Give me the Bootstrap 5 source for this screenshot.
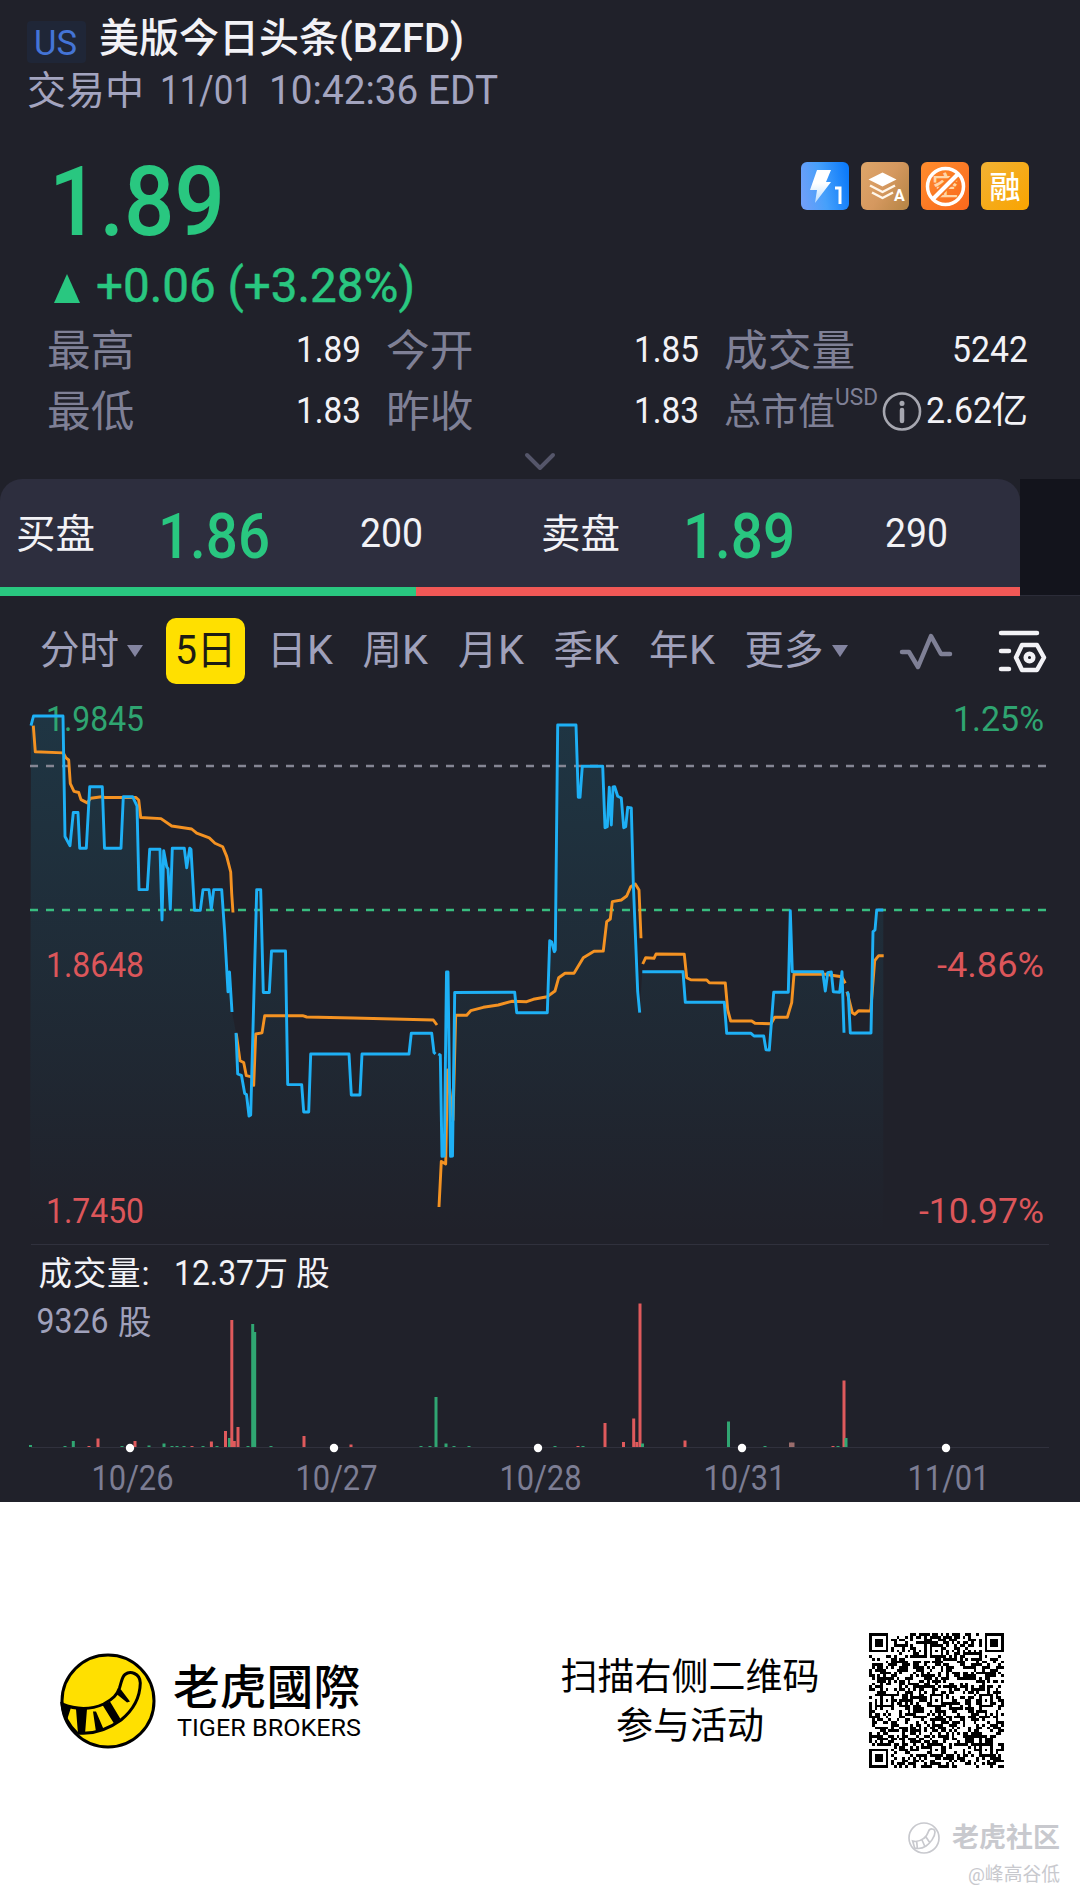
<!DOCTYPE html>
<html lang="zh-CN">

<head>
    <meta charset="UTF-8">
    <meta name="viewport" content="width=device-width, initial-scale=1.0">
    <title>美版今日头条(BZFD)</title>
    <link href="https://cdn.jsdelivr.net/npm/bootstrap@5.3.0/dist/css/bootstrap.min.css" rel="stylesheet">
    <style>
        body {
            width: 1080px;
            height: 1899px;
            overflow: hidden;
            background: #fff;
            font-family: Roboto, "Noto Sans CJK SC", sans-serif;
            line-height: 1;
        }

        .quote { height: 1502px; background: #20212a; color: #f2f2f6; }
        .fit { display: inline-block; white-space: nowrap; transform-origin: left center; font-weight: 400; }
        .fit-m { font-weight: 500; }
        .up { color: #29c780; }

        /* 標題 */
        .title-row { height: 62px; padding: 16px 0 0 27px; }
        .us-tag { width: 59px; height: 42px; margin-top: 5px; border-radius: 4px; background: #1f2637; color: #4474d6; font-size: 35px; padding: 3px 2px 0 0; }
        .stock-name { margin-left: 13px; height: 46px; font-size: 40px; font-weight: 500; }
        .status-row { height: 58px; padding-left: 27px; font-size: 39px; color: #a3a4bf; }
        .status-row .fit { font-size: 40px; }

        /* 價格 */
        .price-row { height: 135px; padding: 42px 51px 0 49px; }
        .price { height: 80px; font-size: 97px; }
        .tags { gap: 12px; }
        .change-row { height: 61px; padding-left: 54px; font-size: 48px; -webkit-text-stroke: .5px #29c780; }
        .change-row svg { margin: 6px 16px 0 0; }
        .stats { display: grid; grid-template-columns: 314px 313px 304px; grid-auto-rows: 61px; column-gap: 25px; padding: 4px 0 0 47px; height: 129px; }
        .stat-label { font-size: 43.7px; color: #7f8096; padding-top: 2px; }
        .stat-label-s { font-size: 37px; }
        .stat-val { font-size: 36.5px; }
        .usd { font-size: 23px; margin-bottom: 28px; color: #7f8096; }
        .chevron-row { height: 34px; padding-top: 7px; }

        /* 買賣盤 */
        .book { height: 117px; background: linear-gradient(to right, #20212a 1020px, #13141c 1020px); box-shadow: inset 0 -1px #2b2c38; }
        .book-inner { width: 1020px; background: #2d2e3e; border-radius: 22px 22px 0 0; }
        .book-side { width: 525px; height: 108px; padding-left: 16px; }
        .book-label { width: 142px; padding-top: 3px; font-size: 39.5px; }
        .book-price { width: 202px; padding-top: 6px; font-size: 63px; }
        .book-qty { font-size: 41px; }
        .book-bar { height: 9px; background: #f15856; }
        .book-bar div { width: 416px; background: #29c780; }

        /* 週期 */
        .tabs { height: 94px; padding: 15px 33px 0 40px; font-size: 39.5px; color: #a0a1bb; }
        .tab-on { width: 79px; height: 66px; margin: 0 22px 0 23px; border-radius: 10px; background: #ffe000; color: #1d1c14; }
        .tab-k { width: 95.5px; }
        .tab-k .fit, .tab-on .fit { font-size: 41px; }
        .tool-icons { gap: 45px; }
        .caret { width: 0; border: 8px solid transparent; border-top: 12px solid #8384a0; border-bottom: 0; }
        .chart text { font-weight: 400; font-size: 35px; }
        .chart .cjk { font-size: 33.5px; }

        /* 頁尾 */
        .foot { height: 397px; padding: 0 76px 0 60px; color: #000; }
        .brand { width: 191px; margin-left: 17px; }
        .brand-cn { font-family: "Noto Sans CJK TC", sans-serif; font-size: 46.8px; font-weight: 500; line-height: 50px; }
        .brand-en { padding: 4px 0 0 4px; font-size: 24px; line-height: 30px; }
        .scan { width: 270px; margin: 2px 0 0 191px; font-size: 37px; line-height: 49px; white-space: nowrap; }
        .wm { color: #c8c9ce; right: 20px; bottom: 14px; }
        .wm-name { font-size: 27px; font-weight: 700; }
        .wm-user { margin-top: 12px; font-size: 18.8px; }
    </style>
</head>

<body>
    <main class="quote">
        <div class="title-row d-flex">
            <div class="us-tag d-flex align-items-center justify-content-center"><span class="fit" data-w="43">US</span></div>
            <div class="stock-name d-flex align-items-center">美版今日头条<span class="fit fit-m" data-w="125">(BZFD)</span></div>
        </div>
        <div class="status-row d-flex align-items-center">交易中<span class="fit ms-3" data-w="93">11/01</span><span class="fit ms-3" data-w="229">10:42:36 EDT</span></div>

        <div class="price-row d-flex justify-content-between">
            <div class="price up d-flex align-items-center"><span class="fit fit-m" data-w="176">1.89</span></div>
            <div class="tags d-flex">
                <svg width="48" height="48" viewBox="0 0 48 48">
                    <defs>
                        <linearGradient id="g1" x1="0" y1="0.6" x2="1" y2="0.4"><stop offset="0" stop-color="#6f9ff8"/><stop offset=".45" stop-color="#46a0fb"/><stop offset="1" stop-color="#0d7bfa"/></linearGradient>
                        <linearGradient id="g2" x1="0" y1="0.2" x2="1" y2="0.8"><stop offset="0" stop-color="#dda468"/><stop offset=".5" stop-color="#d5985f"/><stop offset="1" stop-color="#b98748"/></linearGradient>
                        <linearGradient id="g3" x1="0" y1="0" x2="1" y2="1"><stop offset="0" stop-color="#ff8d2e"/><stop offset="1" stop-color="#f9681c"/></linearGradient>
                        <linearGradient id="g4" x1="0" y1="0" x2="1" y2="1"><stop offset="0" stop-color="#f2b234"/><stop offset="1" stop-color="#f9a400"/></linearGradient>
                        <linearGradient id="g5" x1="0" y1="0" x2="0" y2="1"><stop offset=".4" stop-color="#fff"/><stop offset="1" stop-color="#b9dcfd"/></linearGradient>
                    </defs>
                    <rect width="48" height="48" rx="6" fill="url(#g1)"/>
                    <path d="M16 8h14l-5 12h5L14 41l2-13H9z" fill="url(#g5)"/>
                    <path d="M34 26h5v16" fill="none" stroke="#fff" stroke-width="3"/>
                </svg>
                <svg width="48" height="48" viewBox="0 0 48 48">
                    <rect width="48" height="48" rx="6" fill="url(#g2)"/>
                    <path d="M21.500 10.500L35.500 17.500 21.500 24.500 7.500 17.500z" fill="#fff"/>
                    <path d="M9 23.500l12.500 6.500L34 23.500M11 30.500l10.500 5.500L32 30.500" fill="none" stroke="#fff6ea" stroke-width="2.500" stroke-linejoin="round"/>
                    <text x="33" y="39" font-size="16" font-weight="700" fill="#fff">A</text>
                </svg>
                <svg width="48" height="48" viewBox="0 0 48 48">
                    <rect width="48" height="48" rx="6" fill="url(#g3)"/>
                    <text x="11" y="34" font-size="27" font-weight="500" fill="#ffd6a8">空</text>
                    <path d="M12 37L37 12" stroke="#f97a24" stroke-width="8"/>
                    <path d="M12 37L37 12" stroke="#fff" stroke-width="4"/>
                    <circle cx="24.500" cy="24.500" r="18" fill="none" stroke="#fff" stroke-width="3.500"/>
                </svg>
                <svg width="48" height="48" viewBox="0 0 48 48">
                    <rect width="48" height="48" rx="6" fill="url(#g4)"/>
                    <text x="8.500" y="36" font-size="31" font-weight="500" fill="#fff">融</text>
                </svg>
            </div>
        </div>
        <div class="change-row up d-flex align-items-center">
            <svg width="26" height="29"><path d="M13 0L26 29H0z" fill="#29c780"/></svg>
            <span class="fit" data-w="319">+0.06 (+3.28%)</span>
        </div>

        <div class="stats">
            <div class="d-flex align-items-center justify-content-between"><span class="stat-label">最高</span><span class="stat-val"><span class="fit" data-w="65">1.89</span></span></div>
            <div class="d-flex align-items-center justify-content-between"><span class="stat-label">今开</span><span class="stat-val"><span class="fit" data-w="65">1.85</span></span></div>
            <div class="d-flex align-items-center justify-content-between"><span class="stat-label">成交量</span><span class="stat-val"><span class="fit" data-w="76">5242</span></span></div>
            <div class="d-flex align-items-center justify-content-between"><span class="stat-label">最低</span><span class="stat-val"><span class="fit" data-w="65">1.83</span></span></div>
            <div class="d-flex align-items-center justify-content-between"><span class="stat-label">昨收</span><span class="stat-val"><span class="fit" data-w="65">1.83</span></span></div>
            <div class="d-flex align-items-center">
                <span class="stat-label stat-label-s">总市值</span><span class="usd"><span class="fit" data-w="43">USD</span></span>
                <svg class="ms-auto" width="40" height="40" fill="none" stroke="#a6a7b0"><circle cx="20" cy="19.500" r="18" stroke-width="2.600"/><path d="M20 18V29" stroke-width="4.500" stroke-linecap="round"/><path d="M20 11.300v.1" stroke-width="5" stroke-linecap="round"/></svg>
                <span class="stat-val d-flex align-items-center ms-1"><span class="fit" data-w="66">2.62</span>亿</span>
            </div>
        </div>
        <div class="chevron-row text-center">
            <svg width="32" height="20" class="d-block mx-auto"><path d="M3 3L16 16 29 3" fill="none" stroke="#55566a" stroke-width="4" stroke-linecap="round" stroke-linejoin="round"/></svg>
        </div>

        <div class="book">
            <div class="book-inner">
                <div class="d-flex">
                    <div class="book-side d-flex align-items-center flex-shrink-0">
                        <span class="book-label">买盘</span><span class="book-price up"><span class="fit fit-m" data-w="112">1.86</span></span><span class="book-qty"><span class="fit" data-w="63">200</span></span>
                    </div>
                    <div class="book-side d-flex align-items-center">
                        <span class="book-label">卖盘</span><span class="book-price up"><span class="fit fit-m" data-w="112">1.89</span></span><span class="book-qty"><span class="fit" data-w="63">290</span></span>
                    </div>
                </div>
                <div class="book-bar d-flex"><div></div></div>
            </div>
        </div>

        <div class="tabs d-flex align-items-center">
            <span class="d-flex align-items-center gap-2">分时<i class="caret"></i></span>
            <span class="tab-on d-flex align-items-center justify-content-center"><span class="fit" data-w="22">5</span>日</span>
            <span class="tab-k d-flex align-items-center">日<span class="fit" data-w="26">K</span></span>
            <span class="tab-k d-flex align-items-center">周<span class="fit" data-w="26">K</span></span>
            <span class="tab-k d-flex align-items-center">月<span class="fit" data-w="26">K</span></span>
            <span class="tab-k d-flex align-items-center">季<span class="fit" data-w="26">K</span></span>
            <span class="tab-k d-flex align-items-center">年<span class="fit" data-w="26">K</span></span>
            <span class="d-flex align-items-center gap-2">更多<i class="caret"></i></span>
            <div class="tool-icons d-flex align-items-center ms-auto">
                <svg width="54" height="40" fill="none" stroke="#7f8096" stroke-width="4.500" stroke-linecap="round" stroke-linejoin="round"><path d="M3 21H10L19 36 32 5 42 23H51"/></svg>
                <svg width="49" height="44" fill="none" stroke="#f2f2f6" stroke-width="4.500" stroke-linecap="round" stroke-linejoin="round"><path d="M3 4H39M3 22H11M3 40H11M24 16H39L46 28.500 39 41H24L18 28.500z"/><circle cx="31.500" cy="28.500" r="3.800"/></svg>
            </div>
        </div>

        <svg class="chart d-block" id="chart" width="1080" height="812" viewBox="0 690 1080 812">
            <defs>
                <linearGradient id="area" gradientUnits="userSpaceOnUse" x1="0" y1="716" x2="0" y2="1236"><stop offset="0" stop-color="#18a0c8" stop-opacity=".16"/><stop offset="1" stop-color="#18a0c8" stop-opacity="0"/></linearGradient>
            </defs>
            <g id="fills" fill="url(#area)"></g>
            <g fill="#2fa571">
                <text x="46" y="731" textLength="98" lengthAdjust="spacingAndGlyphs">1.9845</text>
                <text x="953" y="731" textLength="91" lengthAdjust="spacingAndGlyphs">1.25%</text>
            </g>
            <g fill="#dc565a">
                <text x="46" y="976.500" textLength="98" lengthAdjust="spacingAndGlyphs">1.8648</text>
                <text x="46" y="1222.500" textLength="98" lengthAdjust="spacingAndGlyphs">1.7450</text>
                <text x="937" y="976.500" textLength="107" lengthAdjust="spacingAndGlyphs">-4.86%</text>
                <text x="919" y="1222.500" textLength="125" lengthAdjust="spacingAndGlyphs">-10.97%</text>
            </g>
            <g stroke-width="2.600" stroke-dasharray="8 8">
                <path d="M30 766H1048" stroke="#858694"/>
                <path d="M30 910H1048" stroke="#38bd80"/>
            </g>
            <g fill="none" stroke-width="2.900" stroke-linejoin="round">
                <g id="avg" stroke="#f49222"></g>
                <g id="price" stroke="#1eb0f5"></g>
            </g>
            <path d="M31 1244.500H1049M31 1447.500H1049" stroke="#30313d"/>
            <g fill="#f2f2f6">
                <text class="cjk" x="38.500" y="1284.500" textLength="111">成交量:</text>
                <text x="174" y="1284.500" textLength="80" lengthAdjust="spacingAndGlyphs">12.37</text>
                <text class="cjk" x="254.500" y="1284.500">万 股</text>
            </g>
            <g fill="#a0a1bb">
                <text x="36.500" y="1333" textLength="72" lengthAdjust="spacingAndGlyphs">9326</text>
                <text class="cjk" x="118" y="1333.500">股</text>
            </g>
            <g id="vol"></g>
            <g id="days"></g>
        </svg>
    </main>

    <footer class="foot position-relative d-flex align-items-center">
        <svg width="96" height="96" viewBox="0 0 96 96">
            <circle cx="48" cy="48" r="46" fill="#ffe000" stroke="#000" stroke-width="3"/>
            <path d="M2 51Q24 60 43.700 51C53 46 57 42 59.500 35C62 27 62 24 65 21.500C70 17.500 80 20 80.300 30C80 46 72 58 61 67C50 75 36 82 17 80Q4 68 2 51z" fill="#ffe000" stroke="#000" stroke-width="3"/>
            <path d="M2 51L11 54.500 7 67Q3 60 2 51zM16 56H27L25 81 18 81zM33 58.500H36L43.500 76 36 79zM42.500 52L50 48.500 60.500 66 54 70.500zM56.500 41L60.500 36 70 48.500 67 49.500z"/>
        </svg>
        <div class="brand">
            <div class="brand-cn">老虎國際</div>
            <div class="brand-en"><span class="fit" data-w="184">TIGER BROKERS</span></div>
        </div>
        <div class="scan text-center">扫描右侧二维码<br>参与活动</div>
        <svg id="qr" class="ms-auto" width="135" height="135" viewBox="0 0 49 49" shape-rendering="crispEdges"></svg>
        <div class="wm position-absolute text-end">
            <div class="d-flex align-items-center">
                <svg width="32" height="32" viewBox="0 0 96 96" class="me-2 ms-auto" fill="none" stroke="#c8c9ce" stroke-width="5"><circle cx="48" cy="48" r="45"/><path d="M14 57Q30 62 46 50C56 44 58 38 61 29C65 18 80 18 81 30C81 45 66 64 54 72Q38 83 20 78zM26 58L28 78M42 54L50 72M54 45L64 60"/></svg>
                <span class="wm-name ms-1">老虎社区</span>
            </div>
            <div class="wm-user">@峰高谷低</div>
        </div>
    </footer>

    <script>
        // 分時價格,每個交易日一段
        const priceSegs = [
            '31,725.7 33.5,716 63,716 65,836.5 70,845.7 73.3,812.5 78,812.5 79.7,848.2 86.3,848.2 89.7,786.8 102.3,786.8 104.5,848.2 121,848.2 123.3,796.8 132.7,796.8 137,806 139,889.6 147.3,889.6 149.7,849.3 160,849.3 162,920 163.7,850.7 166.7,866.8 168,868.6 170.3,909.3 172.3,848.2 184.3,848.2 186.7,867.9 189.7,848.2 191,849.3 194.5,910.4 200.3,910.4 203,889.6 209,889.6 211.3,909.3 213.7,889.6 221.7,889.6 224.7,932.9 228,991.8 229.5,972 232,1012',
            '236,1032.9 237.7,1074 241.5,1075.4 244.7,1093.6 246.5,1094.6 249,1116 250.7,1115 256.7,889.6 260.7,889.6 263.3,992.5 269.3,992.5 271.5,951 285.5,951 287.7,1084.6 301.7,1084.6 303.7,1112 308.7,1112 310.7,1054 349,1054 351.3,1095 360,1095 362,1054 409,1054 411.3,1033.2 431.7,1033.2 434,1052.5 435.5,1054',
            '438.3,1054 440.3,1055 442,1156.4 444.3,1156 446.5,972 448,972 450.5,1156.4 452.5,1156 454.7,992.5 514.7,992.3 516.7,1012.7 547.3,1012.7 549.7,940.7 551.7,942 554.3,951.7 555.3,950 557.7,725 576,725 578.3,797.3 580,797.3 582.3,766.3 602.7,766.3 605,827.7 607.3,826.7 609.3,787.3 611.3,825 613,787 614.7,786.7 617.7,796.3 621.3,798 623.7,827.7 625.7,826.7 627.7,807.3 631.3,808 633.3,883.3 637.7,991.7 639.7,1012.7',
            '642.3,971.7 683,971.7 685.3,1002.3 724.3,1002.3 726.7,1033.3 751,1033.3 754,1036 763.7,1036 766,1049.7 769.3,1050 773.7,992.3 788.3,992.3 790.3,910.7 792.3,971.7 822.7,971.7 825.3,991 827.7,972.7 831.3,972 833.3,991.7 839.7,992.3 842,971.7 844,1032.7',
            '847,991.7 848.3,994 850.3,1033 871,1033 873,931.7 875,930 876.7,910 883.3,910'
        ];
        // 均價
        const avgSegs = [
            '33.3,725.7 35.3,751.8 63.3,752.9 66,757.9 68.7,760 70.3,783.6 74,791.4 78.7,792.5 81,799.6 87.3,802.9 90.7,798.2 101.7,796.8 105,797.5 136,797.5 138.7,800 140.7,817.5 161,818.6 171.7,826 191.7,829 196.7,833.2 209.3,837.9 215,843.2 222.7,846.8 226.7,856.4 230.7,872 231.7,893.6 233,912.5',
            '236.3,1033.6 240,1060.7 243.7,1062.5 246.3,1075.7 251.7,1076.8 253.7,1085.4 255.7,1034 262,1032.9 264.7,1015.7 302.7,1015.7 306.7,1017 353.3,1018 433.3,1020 437,1025',
            '439,1207 441.3,1161.4 445.7,1164 447.5,1070 450,1092 453,1120 455.7,1015.3 466.7,1015.3 470.7,1010.7 483.3,1007.3 498.3,1005 511.7,1001.3 526.7,1001.7 533.3,999.3 547.3,996.7 555,991 558.7,977.7 565,973.3 574,973.3 583.3,957.7 594,951.3 603.3,951 606.7,921.7 610.3,919 612.3,901.7 621.3,900 626.7,896 630.7,886.7 635.3,884 639,890 641,938.3',
            '642.7,964 645.7,957.7 654,958.3 656,954 684.3,954.3 686.7,977.7 690.7,979.7 706.7,980 709.3,982.7 725.3,983 727.7,1010 730.7,1021 751.7,1021 755,1023.3 771,1023.7 774.7,1017.3 787.3,1017.3 791.7,1002.7 794,974.3 825,974.3 841.7,976.7 845.3,983.3',
            '847,991.7 852.3,1012.7 854.7,1014.3 858.7,1010.7 870.7,1011 874.7,960.7 878.7,955.7 883.7,955.7'
        ];
        const line = pts => `<polyline points="${pts}"/>`;
        document.getElementById('price').innerHTML = priceSegs.map(line).join('');
        document.getElementById('avg').innerHTML = avgSegs.map(line).join('');
        const all = priceSegs.join(' ');
        document.getElementById('fills').innerHTML = `<polygon points="30,1240 ${all} 883.3,1240"/>`;

        // 成交量 [x, 高度, 顏色]
        const R = '#df5a5c', G = '#30a672';
        const bars = [
            [30.5, 2, G], [65, 1, G], [73.3, 6, G], [89, 1, R], [98, 8.5, R], [122, 1, G], [135, 6, R], [149, 1.5, G], [164, 3.5, G], [172, 1, G], [177, 1, G], [184, 1, G],
            [192, 1, R], [203, 1, G], [211.4, 5.5, R], [217, 1, G], [225.5, 16, R], [229.5, 9, G], [231.8, 127, R], [234.3, 6, R], [238, 20, R], [248, 1, G], [252.7, 123, G],
            [254.7, 115, G], [271, 1, G], [304, 11, R], [351, 2.5, R], [421, 1, G], [430, 1, G], [436, 50, G], [446, 3.5, G], [454, 1, G], [469, 1, G], [555, 1, G],
            [578, 1, R], [583, 1, G], [605, 24, R], [623.5, 5, R], [633.7, 28.5, R], [636.8, 5, R], [640, 143.5, R], [642.5, 3.5, G], [685, 6.5, R], [728.5, 25.5, G],
            [765, 1, G], [790.5, 4.5, '#9a6d6c'], [793, 4.5, '#9a6d6c'], [833, 1, R], [838, 1, G], [844, 66.5, R], [846, 9, G]
        ];
        document.getElementById('vol').innerHTML = bars.map(([x, h, c]) =>
            `<rect x="${x - 1.5}" y="${1447 - h}" width="3" height="${h}" fill="${c}"/>`).join('');

        const days = ['10/26', '10/27', '10/28', '10/31', '11/01'];
        document.getElementById('days').innerHTML = days.map((d, i) => `
            <circle cx="${130 + i * 204}" cy="1448" r="4.200" fill="#fff"/>
            <text x="${91.5 + i * 204}" y="1490" textLength="82" lengthAdjust="spacingAndGlyphs" fill="#7c7d93">${d}</text>`).join('');

        // 二維碼
        const N = 49;
        let seed = 20221101;
        const rnd = () => (seed = (seed * 1103515245 + 12345) % 2147483648) / 2147483648;
        const ring = (x, y, cx, cy, r) => {
            const d = Math.max(Math.abs(x - cx), Math.abs(y - cy));
            return d > r ? null : r === 4 ? d === 3 || d <= 1 : d !== 1;
        };
        let cells = '';
        for (let y = 0; y < N; y++) {
            for (let x = 0; x < N; x++) {
                let on = rnd() > 0.5;
                if (x === 6 || y === 6) on = (x + y) % 2 === 0;
                [[24, 6], [6, 24], [24, 24], [42, 24], [24, 42], [42, 42]].forEach(([a, b]) => {
                    const v = ring(x, y, a, b, 2);
                    if (v !== null) on = v;
                });
                [[3, 3], [45, 3], [3, 45]].forEach(([a, b]) => {
                    const v = ring(x, y, a, b, 4);
                    if (v !== null) on = v;
                });
                if (on) cells += `M${x} ${y}h1v1h-1z`;
            }
        }
        document.getElementById('qr').innerHTML = `<path d="${cells}"/>`;

        // 數字壓縮到指定寬度
        document.querySelectorAll('[data-w]').forEach(el => {
            const w = Number(el.dataset.w);
            const scale = w / el.getBoundingClientRect().width;
            el.style.width = w + 'px';
            el.style.transform = `scaleX(${scale})`;
        });
    </script>
    <script src="https://cdn.jsdelivr.net/npm/bootstrap@5.3.0/dist/js/bootstrap.bundle.min.js"></script>
</body>

</html>
